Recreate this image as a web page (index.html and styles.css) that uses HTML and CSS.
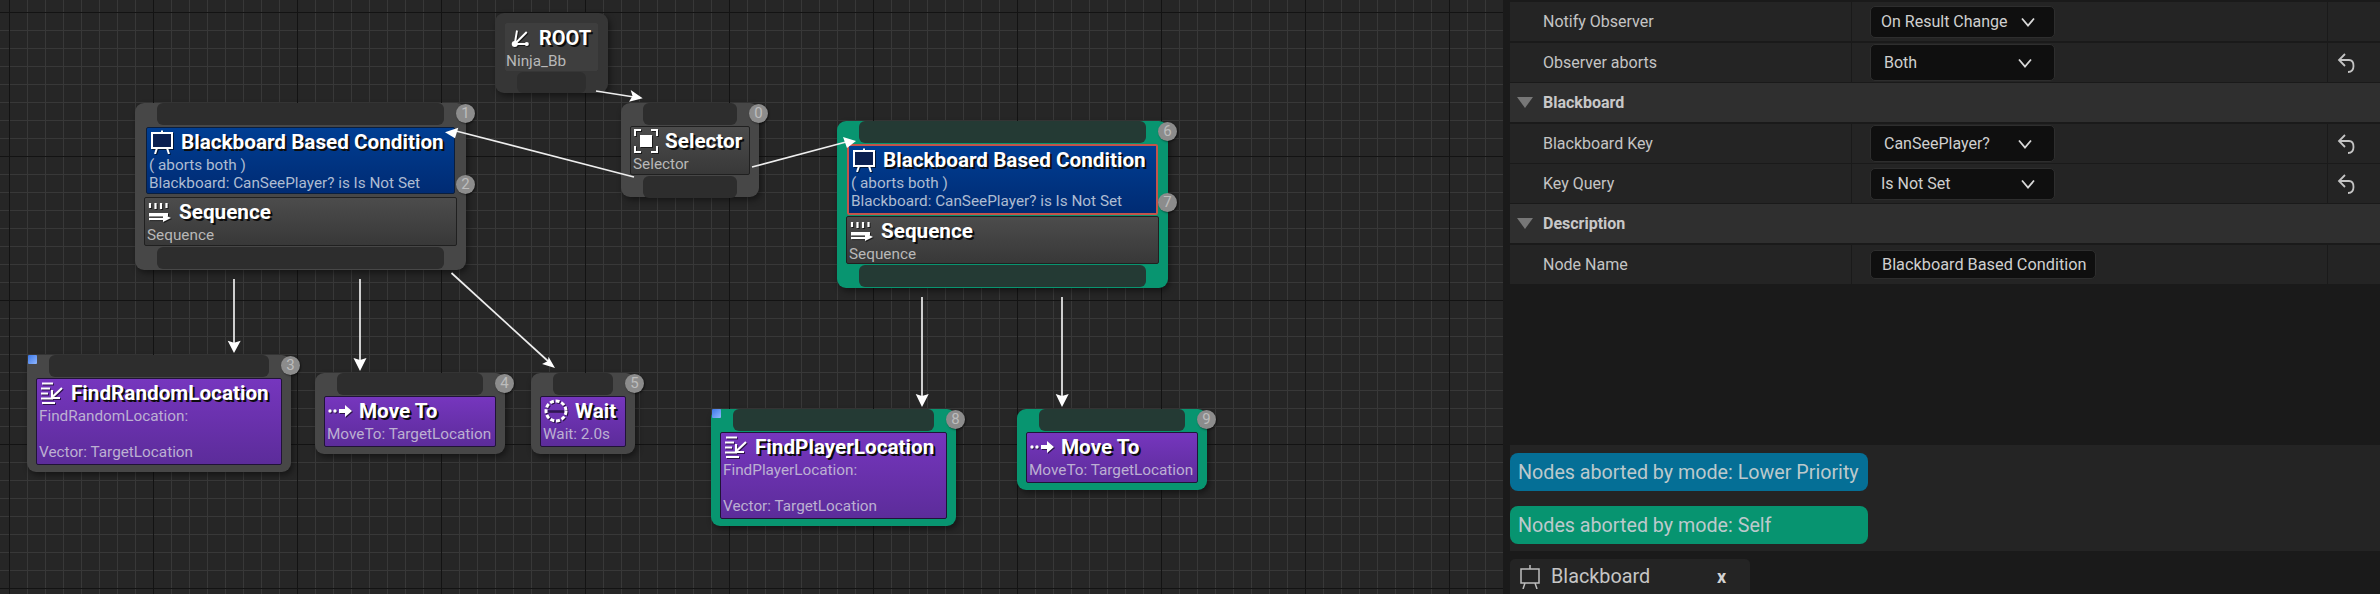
FILE: index.html
```html
<!DOCTYPE html>
<html lang="en">
<head>
<meta charset="utf-8">
<title>Behavior Tree</title>
<link rel="stylesheet" href="styles.css">
</head>
<body>
<svg width="0" height="0" class="defs">
  <defs>
    <symbol id="i-board" viewBox="0 0 24 24">
      <path d="M12 0.5V3" class="st"/>
      <rect x="2" y="3" width="20" height="15" fill="#0b2050" class="st"/>
      <path d="M7 18 5 24M17 18 19 24" class="st"/>
    </symbol>
    <symbol id="i-seq" viewBox="0 0 24 20">
      <path d="M2 1v5M7.500 1v6M13 1v6M18.500 1v5" class="st th"/>
      <path d="M1 11H20V14.500H1Z" fill="#fff"/>
      <path d="M1 17H16" class="st th"/>
      <path d="M15 12 23 16 15 20Z" fill="#fff"/>
    </symbol>
    <symbol id="i-find" viewBox="0 0 24 24">
      <path d="M2 2.500H13M1 7.500H10M1 12.500H8M1 17.500H13M2 22H15" class="st th"/>
      <path d="M22 7 13 15.500M12 9V17H20" class="st th"/>
    </symbol>
    <symbol id="i-move" viewBox="0 0 24 14">
      <circle cx="2" cy="7" r="1.700" fill="#fff"/>
      <circle cx="7" cy="7" r="1.700" fill="#fff"/>
      <path d="M11 5H17V1L24 7 17 13V9H11Z" fill="#fff"/>
    </symbol>
    <symbol id="i-wait" viewBox="0 0 24 24">
      <circle cx="12" cy="12" r="10" class="st dash"/>
      <path d="M4 12H20" stroke="#2b1550" stroke-width="1.500" fill="none"/>
    </symbol>
    <symbol id="i-sel" viewBox="0 0 24 24">
      <rect x="6" y="6" width="12" height="12" fill="#fff"/>
      <path d="M1 7V1H7M17 1H23V7M23 17V23H17M7 23H1V17" class="st"/>
    </symbol>
    <symbol id="i-root" viewBox="0 0 24 24">
      <path d="M5 20 8 2M5 20 21 4M5 20H21" class="st root-st"/>
      <circle cx="5" cy="20" r="4" fill="#fff"/>
      <circle cx="21" cy="20" r="2.800" fill="#fff"/>
    </symbol>
    <symbol id="i-caret" viewBox="0 0 14 10">
      <path d="M1 1.500 7 8.500 13 1.500" fill="none" stroke="#d8d8d8" stroke-width="1.800"/>
    </symbol>
    <symbol id="i-reset" viewBox="0 0 18 22">
      <path d="M8 2 2 8 8 14M2 8H12C15.500 8 16.500 11 16.500 14 16.500 17 15 20 11 20" fill="none" stroke="#c4c4c4" stroke-width="1.800"/>
    </symbol>
  </defs>
</svg>

<main class="app">
  <section class="canvas">

    <article class="node root n-root">
      <div class="card root-card">
        <h3 class="title"><svg class="ico ico-root"><use href="#i-root"/></svg><span>ROOT</span></h3>
        <p class="sub">Ninja_Bb</p>
      </div>
      <div class="pad pad-root"></div>
    </article>

    <article class="node n-sel">
      <div class="pad"></div>
      <div class="card grey">
        <h3 class="title"><svg class="ico"><use href="#i-sel"/></svg><span>Selector</span></h3>
        <p class="sub">Selector</p>
      </div>
      <div class="pad"></div>
      <span class="badge b-top">0</span>
    </article>

    <article class="node n-bb">
      <div class="pad"></div>
      <div class="card blue">
        <h3 class="title"><svg class="ico"><use href="#i-board"/></svg><span>Blackboard Based Condition</span></h3>
        <p class="sub">( aborts both )</p>
        <p class="sub">Blackboard: CanSeePlayer? is Is Not Set</p>
      </div>
      <div class="card grey seq">
        <h3 class="title"><svg class="ico"><use href="#i-seq"/></svg><span>Sequence</span></h3>
        <p class="sub">Sequence</p>
      </div>
      <div class="pad"></div>
      <span class="badge b-top">1</span>
      <span class="badge b-mid">2</span>
    </article>

    <article class="node active n-bb2">
      <div class="pad"></div>
      <div class="card blue picked">
        <h3 class="title"><svg class="ico"><use href="#i-board"/></svg><span>Blackboard Based Condition</span></h3>
        <p class="sub">( aborts both )</p>
        <p class="sub">Blackboard: CanSeePlayer? is Is Not Set</p>
      </div>
      <div class="card grey seq">
        <h3 class="title"><svg class="ico"><use href="#i-seq"/></svg><span>Sequence</span></h3>
        <p class="sub">Sequence</p>
      </div>
      <div class="pad"></div>
      <span class="badge b-top">6</span>
      <span class="badge b-mid">7</span>
    </article>

    <article class="node n-find1">
      <i class="flag"></i>
      <div class="pad"></div>
      <div class="card purple">
        <h3 class="title"><svg class="ico"><use href="#i-find"/></svg><span>FindRandomLocation</span></h3>
        <p class="sub">FindRandomLocation:</p>
        <p class="sub">&nbsp;</p>
        <p class="sub">Vector: TargetLocation</p>
      </div>
      <span class="badge b-top">3</span>
    </article>

    <article class="node n-move1">
      <div class="pad"></div>
      <div class="card purple">
        <h3 class="title"><svg class="ico ico-move"><use href="#i-move"/></svg><span>Move To</span></h3>
        <p class="sub">MoveTo: TargetLocation</p>
      </div>
      <span class="badge b-top">4</span>
    </article>

    <article class="node n-wait">
      <div class="pad"></div>
      <div class="card purple">
        <h3 class="title"><svg class="ico"><use href="#i-wait"/></svg><span>Wait</span></h3>
        <p class="sub">Wait: 2.0s</p>
      </div>
      <span class="badge b-top">5</span>
    </article>

    <article class="node active n-find2">
      <i class="flag"></i>
      <div class="pad"></div>
      <div class="card purple">
        <h3 class="title"><svg class="ico"><use href="#i-find"/></svg><span>FindPlayerLocation</span></h3>
        <p class="sub">FindPlayerLocation:</p>
        <p class="sub">&nbsp;</p>
        <p class="sub">Vector: TargetLocation</p>
      </div>
      <span class="badge b-top">8</span>
    </article>

    <article class="node active n-move2">
      <div class="pad"></div>
      <div class="card purple">
        <h3 class="title"><svg class="ico ico-move"><use href="#i-move"/></svg><span>Move To</span></h3>
        <p class="sub">MoveTo: TargetLocation</p>
      </div>
      <span class="badge b-top">9</span>
    </article>

    <svg class="wires" width="1503" height="594" viewBox="0 0 1503 594">
      <g class="wire">
        <path d="M596 91 634 97"/>
        <path d="M634 177 456 131"/>
        <path d="M752 167 846 142"/>
        <path d="M234 279V345"/>
        <path d="M360 279V362"/>
        <path d="M451.500 273 549 362"/>
        <path d="M922 297V398"/>
        <path d="M1062 297V398"/>
      </g>
      <g class="head">
        <polygon points="630.700,90 642.700,98.300 629,101.700 632.500,96"/>
        <polygon points="445,132.300 458.300,127.700 455,138.300"/>
        <polygon points="843,137 856,141 847,148"/>
        <polygon points="227.700,340.700 234,342.700 240.700,340.700 234,353"/>
        <polygon points="353.500,358 360,360 366.500,358 360,371"/>
        <polygon points="555,368 542,364 548,361 548.500,356.700"/>
        <polygon points="915.700,394 922,396 928.700,394 922,407"/>
        <polygon points="1055.700,394 1062,396 1068.700,394 1062,407"/>
      </g>
    </svg>
  </section>

  <aside class="panel">
    <div class="details">
      <div class="row">
        <div class="name">Notify Observer</div>
        <div class="value"><div class="combo c-slim"><span class="c-tight">On Result Change</span><svg class="caret"><use href="#i-caret"/></svg></div></div>
        <div class="reset"></div>
      </div>
      <div class="row">
        <div class="name">Observer aborts</div>
        <div class="value"><div class="combo"><span>Both</span><svg class="caret"><use href="#i-caret"/></svg></div></div>
        <div class="reset"><svg class="undo"><use href="#i-reset"/></svg></div>
      </div>
      <div class="section"><i class="tri"></i><span>Blackboard</span></div>
      <div class="row">
        <div class="name">Blackboard Key</div>
        <div class="value"><div class="combo"><span>CanSeePlayer?</span><svg class="caret"><use href="#i-caret"/></svg></div></div>
        <div class="reset"><svg class="undo"><use href="#i-reset"/></svg></div>
      </div>
      <div class="row">
        <div class="name">Key Query</div>
        <div class="value"><div class="combo c-slim"><span class="c-tight">Is Not Set</span><svg class="caret"><use href="#i-caret"/></svg></div></div>
        <div class="reset"><svg class="undo"><use href="#i-reset"/></svg></div>
      </div>
      <div class="section"><i class="tri"></i><span>Description</span></div>
      <div class="row">
        <div class="name">Node Name</div>
        <div class="value"><div class="textbox">Blackboard Based Condition</div></div>
        <div class="reset"></div>
      </div>
    </div>
    <div class="spacer"></div>
    <div class="legend">
      <div class="pill pill-blue">Nodes aborted by mode: Lower Priority</div>
      <div class="pill pill-green">Nodes aborted by mode: Self</div>
    </div>
    <div class="tabbar">
      <div class="tab">
        <svg class="tab-ico" viewBox="0 0 22 24"><path d="M11 0V4M2 4H20V18H2ZM6 18 4 24M16 18 18 24" fill="none" stroke="#bdbdbd" stroke-width="1.500"/></svg>
        <span class="tab-label">Blackboard</span>
        <span class="tab-x">x</span>
      </div>
    </div>
  </aside>
</main>
</body>
</html>
```
FILE: styles.css
```css
* { box-sizing: border-box; margin: 0; padding: 0; }
html, body { width: 2380px; height: 594px; overflow: hidden; background: #1a1a1a; }
body { font-family: Roboto, "Liberation Sans", sans-serif; }
.defs { position: absolute; }
.st { fill-opacity: 1; stroke: #fff; stroke-width: 2; fill: none; }
rect.st { fill: #0b2050; }
.th { stroke-width: 2.2; }
.root-st { stroke-width: 2.6; }
.dash { stroke-width: 3; stroke-dasharray: 4 1.800; }

.app { display: flex; width: 2380px; height: 594px; }

.canvas {
  position: relative;
  width: 1503px;
  height: 594px;
  flex: none;
  overflow: hidden;
  background-color: #262626;
  background-image:
    linear-gradient(to right, #131313 1px, transparent 1px),
    linear-gradient(to bottom, #131313 1px, transparent 1px),
    linear-gradient(to right, #383838 1px, transparent 1px),
    linear-gradient(to bottom, #383838 1px, transparent 1px);
  background-size: 144px 144px, 144px 144px, 18px 18px, 18px 18px;
  background-position: 9px 0, 0 12px, 9px 0, 0 12px;
}

.wires { position: absolute; left: 0; top: 0; pointer-events: none; }
.wire path { fill: none; stroke: #eee; stroke-width: 1.7; }
.head polygon { fill: #fff; }

/* Tree nodes sit on a free canvas */
.node {
  position: absolute;
  display: flex;
  flex-direction: column;
  padding: 0 9px;
  background: #474747;
  border-radius: 9px;
  box-shadow: 2px 3px 6px rgba(0, 0, 0, .45);
}
.node.active { background: #089570; }
.node.active .pad { background: #243a34; }

.n-root  { left: 495px;  top: 13px;  width: 113px; height: 80px; padding: 10px 9px 0; background: #363636; }
.n-sel   { left: 621px;  top: 103px; width: 138px; height: 94px; }
.n-bb    { left: 135px;  top: 103px; width: 331px; height: 167px; }
.n-bb2   { left: 837px;  top: 121px; width: 331px; height: 167px; }
.n-find1 { left: 27px;   top: 355px; width: 264px; height: 117px; }
.n-move1 { left: 315px;  top: 373px; width: 190px; height: 81px; }
.n-wait  { left: 531px;  top: 373px; width: 104px; height: 81px; }
.n-find2 { left: 711px;  top: 409px; width: 245px; height: 117px; }
.n-move2 { left: 1017px; top: 409px; width: 190px; height: 81px; }

.pad {
  flex: none;
  height: 22px;
  margin: 0 13px;
  background: #2d2d2d;
  border-radius: 0 0 6px 6px;
}
.pad:first-child, .flag + .pad { border-radius: 6px; }
.card + .pad { border-radius: 6px; margin-top: 1px; }
.pad-root { margin: 1px 13px 0; height: 21px; background: #2e2e2e; }

.card {
  flex: none;
  margin-top: 1px;
  height: 49px;
  padding: 0 2px;
  border: 1px solid #1d1d1d;
  border-radius: 2px;
  overflow: hidden;
}
.root-card { margin: 0 1px; height: 48px; background: #3e3e3e; border-color: #3e3e3e; padding: 0; }
.grey { background: linear-gradient(#4c4c4c, #383838); border-color: #202020; }
.blue {
  height: 67px;
  margin: 2px 2px 0;
  background: linear-gradient(#003e93, #002b73);
  border-color: #0b1e3c;
}
.seq { margin-top: 3px; height: 49px; }
.picked {
  height: 71px;
  margin: 1px 1px 0;
  padding: 0 2px;
  border: 2px solid #c3544b;
}
.n-bb2 .seq { margin-top: 1px; height: 48px; }
.purple {
  height: auto;
  background: linear-gradient(#7636be, #5c2c9a);
  border-color: #211338;
  padding-bottom: 3px;
}

.title {
  display: flex;
  align-items: center;
  height: 28px;
  font-size: 20.700px;
  font-weight: 700;
  color: #fff;
  white-space: nowrap;
  text-shadow: 2px 2px 0 #0c0c0c;
}
.ico { flex: none; width: 24px; height: 24px; margin: 0 7px 0 1px; filter: drop-shadow(1px 1px 0 rgba(0,0,0,.6)); }
.ico-move { width: 24px; height: 14px; }
.ico-root { width: 18px; height: 18px; margin: 0 10px 0 5px; }
.root-card .title { font-size: 20px; }
.sub {
  font-size: 15.300px;
  line-height: 18px;
  color: #b8b8b8;
  white-space: nowrap;
}
.blue .sub { color: #aebcd2; }
.purple .sub { color: #bcb0d2; }

.flag {
  position: absolute;
  left: 1px;
  top: 0;
  width: 9px;
  height: 9px;
  background: linear-gradient(135deg, #3c78e8, #8fb6ff);
  border-radius: 1px;
}
.badge {
  position: absolute;
  right: -9px;
  width: 19px;
  height: 19px;
  border-radius: 50%;
  background: #8c8c8c;
  color: #bcbcbc;
  font-size: 15px;
  line-height: 19px;
  text-align: center;
  box-shadow: 1px 1px 2px rgba(0, 0, 0, .5);
}
.b-top { top: 1px; }
.b-mid { top: 72px; }

/* Details panel */
.panel {
  flex: 1;
  display: flex;
  flex-direction: column;
  height: 594px;
  margin-left: 7px;
  color: #c4c4c4;
  font-size: 16px;
}
.details { display: flex; flex-direction: column; padding-top: 2px; flex: none; }
.row { display: grid; grid-template-columns: 339px 1fr 53px; height: 39px; margin-bottom: 2px; background: #242424; column-gap: 2px; }
.row:nth-child(2), .row:nth-child(5) { margin-bottom: 1px; }
.row:nth-child(4) { margin-bottom: 1px; }
.row:last-child { margin-bottom: 0; }
.name { display: flex; align-items: center; padding-left: 33px; }
.value { display: flex; align-items: center; padding-left: 18px; border-left: 1px solid #1a1a1a; background: #242424; }
.reset { display: flex; align-items: center; justify-content: center; border-left: 1px solid #1a1a1a; padding-right: 16px; }
.combo {
  display: flex;
  align-items: center;
  width: 185px;
  height: 37px;
  padding: 0 22px 0 13px;
  justify-content: space-between;
  background: #0f0f0f;
  border: 1px solid #2e2e2e;
  border-radius: 5px;
  color: #cfcfcf;
}
.c-slim { height: 32px; padding: 0 19px 0 10px; }
.c-tight { white-space: nowrap; }
.caret { width: 14px; height: 10px; flex: none; }
.undo { width: 18px; height: 22px; }
.section {
  display: flex;
  align-items: center;
  height: 39px;
  margin-bottom: 2px;
  padding-left: 7px;
  background: #2f2f2f;
  font-weight: 700;
  color: #c8c8c8;
}
.section span { margin-left: 10px; }
.tri {
  width: 0;
  height: 0;
  border-left: 8px solid transparent;
  border-right: 8px solid transparent;
  border-top: 11px solid #777;
}
.textbox {
  display: flex;
  align-items: center;
  width: 226px;
  height: 29px;
  padding: 0 11px;
  background: #0f0f0f;
  border: 1px solid #2e2e2e;
  border-radius: 5px;
  color: #cfcfcf;
  font-size: 16.300px;
  white-space: nowrap;
}
.spacer { flex: 1; }
.legend {
  flex: none;
  display: flex;
  flex-direction: column;
  gap: 15px;
  height: 106px;
  padding-top: 8px;
  background: #242424;
}
.pill {
  width: 358px;
  height: 38px;
  padding-left: 8px;
  display: flex;
  align-items: center;
  border-radius: 8px;
  font-size: 19.700px;
  color: #bcc9cc;
  white-space: nowrap;
}
.pill-blue { background: #056f96; }
.pill-green { background: #079470; }
.tabbar { flex: none; height: 43px; padding-top: 8px; }
.tab {
  display: flex;
  align-items: center;
  width: 240px;
  height: 35px;
  padding-left: 9px;
  background: #242424;
  border-radius: 5px 5px 0 0;
}
.tab-ico { width: 22px; height: 24px; flex: none; }
.tab-label { margin-left: 10px; font-size: 19.800px; color: #c6c6c6; }
.tab-x { margin-left: 67px; font-size: 18px; font-weight: 700; color: #d2d2d2; }
```
